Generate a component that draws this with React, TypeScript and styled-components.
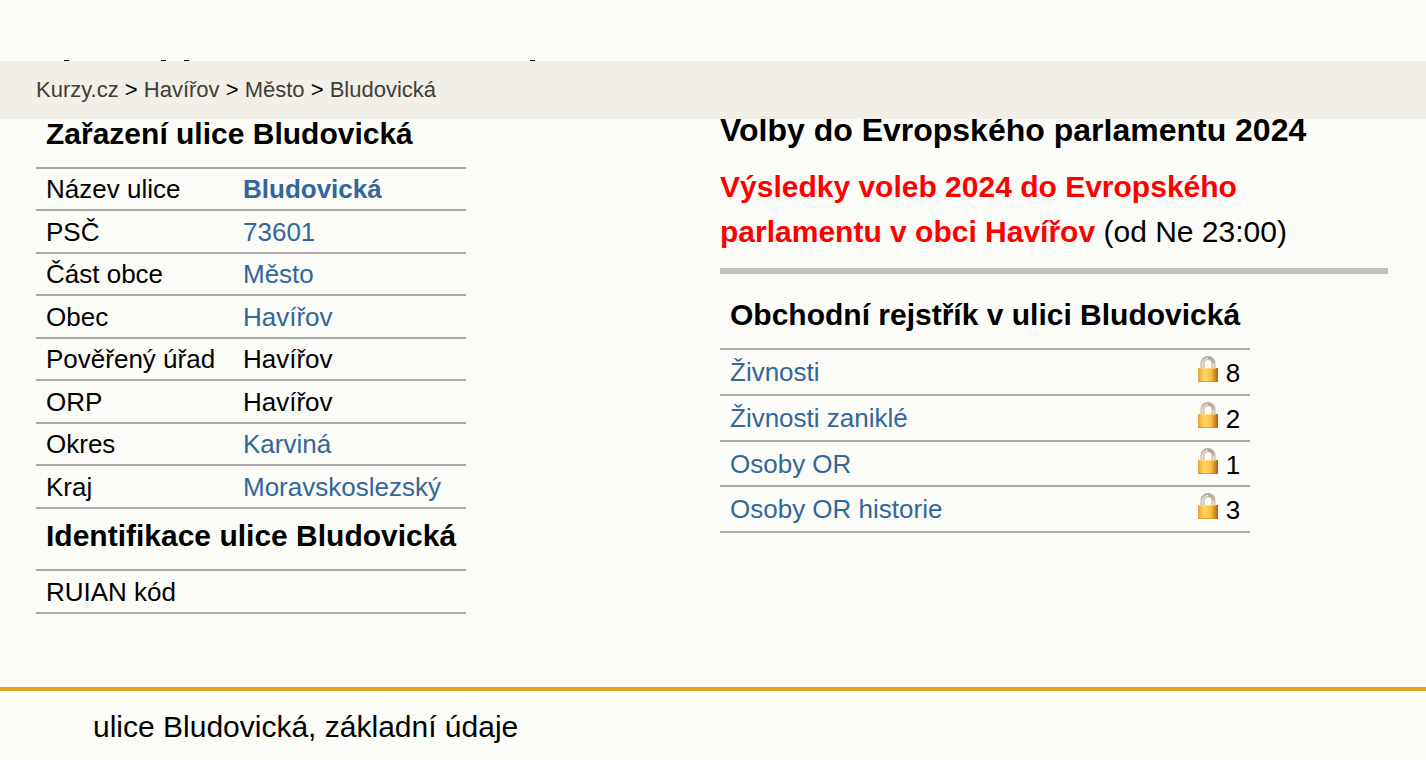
import React from "react";
import styled, { createGlobalStyle } from "styled-components";

const GlobalStyle = createGlobalStyle`
  body {
    margin: 0;
    background: #fbfbf7;
    color: #000;
    font-family: "Liberation Sans", Arial, sans-serif;
    font-size: 26px;
    line-height: 30px;
  }
`;

const Masthead = styled.header`
  height: 61px;
  display: flex;
  align-items: flex-end;
`;

const Descenders = styled.svg`
  display: block;
`;

const Breadcrumb = styled.nav`
  position: sticky;
  top: 0;
  z-index: 1;
  background: #f2eee8;
  padding: 14px 36px;
  font-size: 22px;
`;

const CrumbLink = styled.a`
  color: #3f3e36;
  text-decoration: none;
`;

/* The columns start slightly under the sticky breadcrumb bar. */
const Columns = styled.main`
  display: grid;
  grid-template-columns: 684px 1fr;
  margin-top: -4px;
  padding: 0 38px 0 36px;
`;

const Column = styled.section`
  min-width: 0;
`;

const DataTable = styled.table<{ $wide?: boolean }>`
  border-collapse: collapse;
  width: ${(p) => (p.$wide ? "530px" : "430px")};
`;

const TableTitle = styled.th`
  text-align: left;
  vertical-align: top;
  font-size: 30px;
  line-height: 34px;
  padding: 10px 10px 16px;
  border-bottom: 2px solid #a9a9a9;
  white-space: nowrap;
`;

const LeadTitle = styled(TableTitle)`
  padding-top: 2px;
`;

const Row = styled.tr`
  height: 43px;
  border-bottom: 2px solid #a9a9a9;
  &:nth-child(odd) {
    height: 42px;
  }
`;

const CountRow = styled.tr`
  height: 46px;
  border-bottom: 2px solid #a9a9a9;
  &:nth-child(3) {
    height: 45px;
  }
`;

const Label = styled.td`
  width: 177px;
  padding: 0 10px;
  white-space: nowrap;
`;

const Value = styled.td`
  padding: 0 10px;
`;

const Count = styled.td`
  padding: 6px 10px 0;
  vertical-align: top;
`;

const CountInner = styled.span`
  display: flex;
  justify-content: flex-end;
  align-items: flex-start;
  gap: 7px;
  line-height: 34px;
`;

const Anchor = styled.a<{ $bold?: boolean }>`
  color: #336699;
  text-decoration: none;
  font-weight: ${(p) => (p.$bold ? 700 : 400)};
`;

const ElectionTitle = styled.h2`
  margin: 0;
  padding-bottom: 19px;
  font-size: 32px;
  line-height: 30px;
`;

const Election = styled.p`
  margin: 0;
  padding-bottom: 14px;
  border-bottom: 6px solid #c0c0c0;
  font-size: 30px;
  line-height: 45px;
`;

const Results = styled.a`
  color: #f00;
  font-weight: 700;
  text-decoration: none;
`;

const Registry = styled.div`
  padding-top: 14px;
`;

const Footer = styled.footer`
  margin-top: 73px;
  border-top: 4px solid #daa520;
  padding: 19px 93px;
  font-size: 30px;
  line-height: 34px;
`;

const Padlock = () => (
  <svg width="22" height="28" viewBox="0 0 22 28" aria-hidden="true">
    <defs>
      <linearGradient id="lockBody" x1="0" x2="1">
        <stop offset="0" stopColor="#dfa040" />
        <stop offset="0.15" stopColor="#f6bd4a" />
        <stop offset="0.35" stopColor="#ffd766" />
        <stop offset="0.65" stopColor="#fbbe38" />
        <stop offset="0.85" stopColor="#d08a28" />
        <stop offset="1" stopColor="#9c6224" />
      </linearGradient>
      <linearGradient id="lockShackle" x1="0" x2="0" y1="0" y2="1">
        <stop offset="0" stopColor="#b5a79f" />
        <stop offset="0.6" stopColor="#c9bcae" />
        <stop offset="1" stopColor="#d3ab6a" />
      </linearGradient>
    </defs>
    <path d="M5.5 13V7.5a5.5 5.5 0 0 1 11 0V13" fill="none" stroke="url(#lockShackle)" strokeWidth="4" />
    <path d="M5.5 12V7.5a5.5 5.5 0 0 1 5.5-5M16.500 12V8" fill="none" stroke="#eee7e0" strokeWidth="1.500" />
    <rect x="1" y="12" width="20" height="14" fill="url(#lockBody)" />
    <path d="M2 12.500h17" stroke="#ffe9a8" strokeOpacity="0.5" />
    <path d="M1 25.500h20" stroke="#c98522" strokeOpacity="0.6" />
  </svg>
);

const crumbs = ["Kurzy.cz", "Havířov", "Město", "Bludovická"];

const facts = [
  { label: "Název ulice", value: "Bludovická", link: true, bold: true },
  { label: "PSČ", value: "73601", link: true },
  { label: "Část obce", value: "Město", link: true },
  { label: "Obec", value: "Havířov", link: true },
  { label: "Pověřený úřad", value: "Havířov" },
  { label: "ORP", value: "Havířov" },
  { label: "Okres", value: "Karviná", link: true },
  { label: "Kraj", value: "Moravskoslezský", link: true },
];

const registry = [
  { label: "Živnosti", count: 8 },
  { label: "Živnosti zaniklé", count: 2 },
  { label: "Osoby OR", count: 1 },
  { label: "Osoby OR historie", count: 3 },
];

export default function App() {
  return (
    <>
      <GlobalStyle />
      <Masthead>
        <Descenders width="600" height="1" aria-hidden="true">
          <path d="M64 .5h5M161 .5h5M184 .5h5M530 .5h5" stroke="#000" />
        </Descenders>
      </Masthead>
      <Breadcrumb aria-label="Drobečková navigace">
        {crumbs.map((c, i) => (
          <React.Fragment key={c}>
            {i > 0 && " > "}
            <CrumbLink href="#">{c}</CrumbLink>
          </React.Fragment>
        ))}
      </Breadcrumb>
      <Columns>
        <Column>
          <DataTable>
            <thead>
              <tr>
                <LeadTitle colSpan={2}>Zařazení ulice Bludovická</LeadTitle>
              </tr>
            </thead>
            <tbody>
              {facts.map((f) => (
                <Row key={f.label}>
                  <Label>{f.label}</Label>
                  <Value>
                    {f.link ? (
                      <Anchor href="#" $bold={f.bold}>
                        {f.value}
                      </Anchor>
                    ) : (
                      f.value
                    )}
                  </Value>
                </Row>
              ))}
            </tbody>
            <tbody>
              <tr>
                <TableTitle colSpan={2}>Identifikace ulice Bludovická</TableTitle>
              </tr>
              <Row>
                <Label>RUIAN kód</Label>
                <Value />
              </Row>
            </tbody>
          </DataTable>
        </Column>
        <Column>
          <ElectionTitle>Volby do Evropského parlamentu 2024</ElectionTitle>
          <Election>
            <Results href="#">Výsledky voleb 2024 do Evropského parlamentu v obci Havířov</Results> (od Ne 23:00)
          </Election>
          <Registry>
            <DataTable $wide>
              <thead>
                <tr>
                  <TableTitle colSpan={2}>Obchodní rejstřík v ulici Bludovická</TableTitle>
                </tr>
              </thead>
              <tbody>
                {registry.map((r) => (
                  <CountRow key={r.label}>
                    <Value>
                      <Anchor href="#">{r.label}</Anchor>
                    </Value>
                    <Count>
                      <CountInner>
                        <Padlock />
                        {r.count}
                      </CountInner>
                    </Count>
                  </CountRow>
                ))}
              </tbody>
            </DataTable>
          </Registry>
        </Column>
      </Columns>
      <Footer>ulice Bludovická, základní údaje</Footer>
    </>
  );
}
